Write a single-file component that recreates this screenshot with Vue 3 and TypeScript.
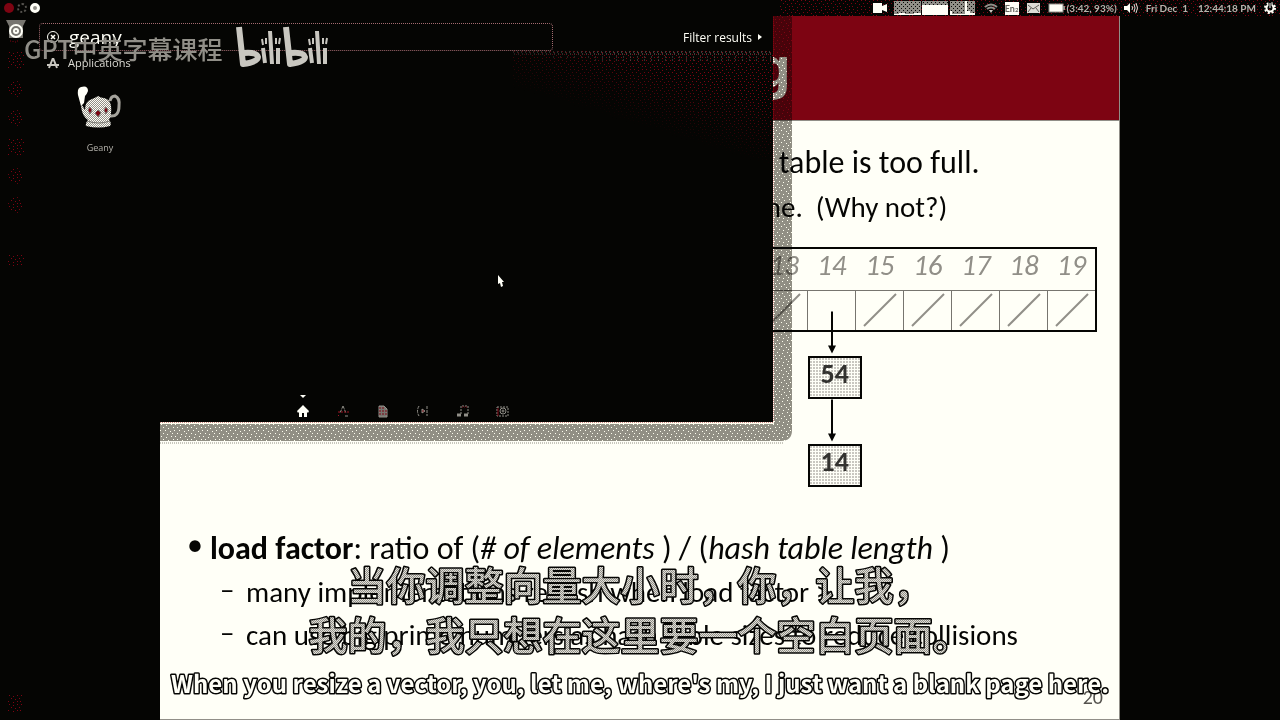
<script setup lang="ts">
import { ref } from 'vue'

const query = ref('geany')
const buckets: number[] = [13, 14, 15, 16, 17, 18, 19]
const filledBucket = 14
const chain: number[] = [54, 14]
const lenses: string[] = ['Home', 'Applications', 'Files', 'Videos', 'Music', 'Photos']
const launcherItems: number[] = [1, 2, 3, 4, 5, 6, 7]
</script>

<template>
  <div class="desktop">
    <svg class="patterns" width="0" height="0" aria-hidden="true">
      <defs>
        <pattern id="red-dots" width="12" height="9" patternUnits="userSpaceOnUse">
          <path d="M1 0h1v1h-1zM5 1h1v1h-1zM9 0h1v1h-1zM3 3h1v1h-1zM7 4h1v1h-1zM11 3h1v1h-1zM0 6h1v1h-1zM5 7h1v1h-1zM9 6h1v1h-1z" fill="#7d0412" />
        </pattern>
        <pattern id="white-dots" width="14" height="12" patternUnits="userSpaceOnUse">
          <rect width="14" height="12" fill="#918f88" />
          <path d="M1 0h1v1h-1zM6 1h1v1h-1zM11 0h1v1h-1zM3 3h1v1h-1zM8 4h1v1h-1zM13 3h1v1h-1zM0 6h1v1h-1zM5 6h1v1h-1zM10 7h1v1h-1zM3 9h1v1h-1zM7 10h1v1h-1zM12 9h1v1h-1z" fill="#fffff7" />
        </pattern>
      </defs>
    </svg>

    <header class="topbar">
      <div class="window-controls">
        <button class="ctl close" aria-label="Close"></button>
        <button class="ctl minimize" aria-label="Minimize"></button>
        <button class="ctl restore" aria-label="Restore"></button>
      </div>
      <div class="indicators">
        <svg class="grain" width="100%" height="16"><rect width="100%" height="16" fill="url(#red-dots)" /></svg>
        <svg class="i-cam" width="14" height="10" viewBox="0 0 14 10"><path d="M0 0H9V3L14 1V9L9 7V10H0Z" fill="#fffff7" /></svg>
        <svg class="i-graph" width="84" height="16" viewBox="0 0 84 16">
          <defs>
            <pattern id="load" width="4" height="4" patternUnits="userSpaceOnUse">
              <rect width="4" height="4" fill="#918f88" /><path d="M0 0h1v1H0zM2 2h1v1H2z" fill="#050503" />
            </pattern>
          </defs>
          <rect x="1" y="1" width="27" height="14" fill="url(#load)" />
          <path d="M1 14h5v-1h6v1h9v-1h7v2H1z" fill="#fffff7" />
          <rect x="29" y="1" width="26" height="4" fill="url(#load)" /><rect x="29" y="5" width="26" height="10" fill="#fffff7" />
          <rect x="57" y="1" width="25" height="14" fill="url(#load)" />
          <path d="M57 15v-4h2v3h13V1h2v10h3v2h5v2z" fill="#fffff7" />
        </svg>
        <svg class="i-wifi" width="14" height="10" viewBox="0 0 14 10"><path d="M1 4Q7 -1 13 4M3 6Q7 3 11 6" fill="none" stroke="#918f88" stroke-width="2" /><path d="M5 7h4l-2 3z" fill="#c9c7c0" /></svg>
        <span class="keyboard">En<small>2</small></span>
        <svg class="i-mail" width="13" height="10" viewBox="0 0 13 10"><rect width="13" height="10" fill="#dddcd5" /><path d="M1 2L6 6L12 2M1 9L4 5M12 9L9 5" fill="none" stroke="#5c5b56" /></svg>
        <svg class="i-bat" width="17" height="10" viewBox="0 0 17 10"><rect x="1" y="1" width="14" height="8" fill="#fffff7" stroke="#918f88" /><path d="M16 3v4" stroke="#918f88" stroke-width="2" /></svg>
        <span class="battery">(3:42, 93%)</span>
        <svg class="i-vol" width="14" height="10" viewBox="0 0 14 10"><path d="M0 3H3L6 0V10L3 7H0Z" fill="#fffff7" /><path d="M8 3Q9 5 8 7M10 1Q12 5 10 9M12 0Q15 5 12 10" fill="none" stroke="#dddcd5" /></svg>
        <span class="day">Fri Dec&nbsp; 1</span>
        <span class="time">12:44:18 PM</span>
        <svg class="i-gear" width="12" height="12" viewBox="0 0 12 12"><circle cx="6" cy="6" r="3.5" fill="none" stroke="#fffff7" stroke-width="2" /><circle cx="6" cy="6" r="5" fill="none" stroke="#fffff7" stroke-width="2" stroke-dasharray="2 1.93" /><path d="M6 0v6" stroke="#050503" stroke-width="3" /><path d="M6 1v5" stroke="#fffff7" /></svg>
      </div>
    </header>

    <main class="slide">
      <div class="banner"><h1>g</h1></div>
      <div class="upper">
        <p class="lead">table is too full.</p>
        <p class="follow">ne.&nbsp; (Why not?)</p>
        <div class="table-wrap">
          <table>
            <thead>
              <tr><th v-for="n in buckets" :key="n" scope="col">{{ n }}</th></tr>
            </thead>
            <tbody>
              <tr>
                <td v-for="n in buckets" :key="n">
                  <svg v-if="n !== filledBucket" width="34" height="34" viewBox="0 0 34 34"><path d="M1 33L33 1" stroke="#918f88" stroke-width="2" /></svg>
                </td>
              </tr>
            </tbody>
          </table>
          <div class="chain">
            <template v-for="value in chain" :key="value">
              <svg class="arrow" width="8" height="44" viewBox="0 0 8 44"><path d="M4 0V36" stroke="#050503" stroke-width="2" /><path d="M0 34H8L4 42Z" fill="#050503" /></svg>
              <div class="node">{{ value }}</div>
            </template>
          </div>
        </div>
      </div>
      <ul class="points">
        <li class="main-point">
          <p><b>load factor</b>: ratio of (<i># of elements </i>) / (<i>hash table length </i>)</p>
          <ul>
            <li>many implementations rehash when load factor ≥ .</li>
            <li>can use big prime numbers as hash table sizes to reduce collisions</li>
          </ul>
        </li>
      </ul>
      <span class="page-number">20</span>
    </main>

    <svg class="dash-shadow" width="632" height="428">
      <path d="M0 0H632V414Q632 425 621 425H0Z" fill="url(#white-dots)" />
      <path d="M0 427H624" stroke="#918f88" stroke-width="1" stroke-dasharray="1 1" />
      <path d="M0 407H613V0" fill="none" stroke="#fffff7" stroke-width="2" />
      <path d="M0 406H613V0" fill="none" stroke="#a01525" stroke-width="1" stroke-dasharray="1 1" />
    </svg>
    <nav class="launcher" aria-label="Launcher">
      <button class="home" aria-label="Dash home">
        <svg width="22" height="26" viewBox="0 0 22 26"><path d="M1 1H21L18 7V19H4V7Z" fill="#77756f" /><circle cx="11" cy="12" r="6" fill="#77756f" stroke="#fffff7" stroke-width="2" /><circle cx="11" cy="12" r="3" fill="#fffff7" /><circle cx="11" cy="12" r="1" fill="#77756f" /><path d="M5 22h3v1h3v-1h4" fill="none" stroke="#7d0412" stroke-dasharray="1 2" /></svg>
      </button>
      <button v-for="n in launcherItems" :key="n" class="app" :class="'app-' + n" :aria-label="'Application ' + n">
        <svg width="16" height="16"><rect width="16" height="16" fill="url(#red-dots)" /></svg>
      </button>
      <button class="app trash" aria-label="Trash">
        <svg width="14" height="18"><rect width="14" height="18" fill="url(#red-dots)" /></svg>
      </button>
    </nav>

    <section class="dash">
      <svg class="sheen" width="260" height="120">
        <rect width="260" height="120" fill="url(#red-dots)" />
        <path d="M0 1H260M1 3H260" stroke="#77756f" stroke-dasharray="1 3" />
        <path d="M40 6H260M82 9H260" stroke="#5c5b56" stroke-dasharray="1 6" />
      </svg>
      <div class="search-row">
        <label class="search">
          <svg width="14" height="14" viewBox="0 0 14 14"><circle cx="7" cy="7" r="5.5" fill="none" stroke="#fffff7" /><path d="M5 5L9 9M9 5L5 9" stroke="#fffff7" stroke-width="1.5" /></svg>
          <input v-model="query" type="text" aria-label="Search" />
        </label>
        <button class="filter">Filter results <svg width="4" height="6" viewBox="0 0 4 6"><path d="M0 0L4 3L0 6Z" fill="#fffff7" /></svg></button>
      </div>
      <h2>
        <svg width="12" height="11" viewBox="0 0 12 11"><path d="M6 0L2 10M6 0L10 10M0 7H12" fill="none" stroke="#c9c7c0" stroke-width="2" /></svg>
        Applications
      </h2>
      <a class="result" href="#geany">
        <svg width="46" height="42" viewBox="0 0 46 42">
          <defs>
            <pattern id="pot" width="2" height="2" patternUnits="userSpaceOnUse">
              <rect width="2" height="2" fill="#fffff7" /><path d="M0 0h1v1H0zM1 1h1v1H1z" fill="#918f88" />
            </pattern>
          </defs>
          <path d="M33 15Q34 10 38 10Q43 12 42 20Q42 31 33 30" fill="none" stroke="#a5a39c" stroke-width="3" />
          <path d="M5 19L8 24Q8 15 15 13Q18 12 21 10Q24 12 27 12Q33 13 34 20Q35 29 32 34Q35 37 33 40Q22 43 9 40Q8 37 11 34Q5 30 4 20Z" fill="url(#pot)" />
          <path d="M1 9Q0 2 4 1Q11 -1 11 5Q10 8 8 10L7 17L4 20Z" fill="#fffff7" />
          <path d="M13 21l2 3-2 4-2-4zM21 24l3 3-3 4-3-4zM29 21l2 3-2 4-2-4z" fill="#7d0412" stroke="#77756f" />
          <path d="M10 35Q22 39 33 35" fill="none" stroke="#77756f" />
        </svg>
        <span>Geany</span>
      </a>
      <nav class="lenses" aria-label="Lenses">
        <button v-for="(lens, i) in lenses" :key="lens" :class="{ current: i === 0 }" :aria-label="lens">
          <svg width="14" height="14" viewBox="0 0 14 14" fill="none" stroke="#918f88">
            <path v-if="i === 0" d="M7 1L13 7L12 9L11 8V13H8V9H6V13H3V8L2 9L1 7Z" fill="#fffff7" stroke="none" />
            <template v-else-if="i === 1"><path d="M7 2L4 9M7 2L10 9M9 12h3" stroke-dasharray="3 1" /><path d="M2 8h11M3 11l-1 1" stroke="#a01525" stroke-dasharray="2 1" /></template>
            <template v-else-if="i === 2"><path d="M3 2H8L11 5V13H3Z" fill="#77756f" /><path d="M3 4h6M3 7h8M3 10h8" stroke="#7d0412" stroke-dasharray="2 1" /></template>
            <template v-else-if="i === 3"><path d="M3 2Q0 7 3 12M11 2V12" stroke-dasharray="3 1" /><path d="M6 5L9 7L6 9Z" fill="#7d0412" /></template>
            <template v-else-if="i === 4"><path d="M5 10V2H12V10" stroke-dasharray="2 1" /><path d="M1 11h4M8 11h4" stroke-width="3" /><path d="M6 3h6" stroke="#7d0412" stroke-dasharray="1 1" /></template>
            <template v-else><path d="M1 3H12V12H1Z" stroke-dasharray="2 1" /><circle cx="7" cy="7" r="3" /><circle cx="7" cy="7" r="1" /><path d="M2 4v8" stroke="#7d0412" /></template>
          </svg>
        </button>
      </nav>
    </section>

    <svg class="cursor" width="6" height="12" viewBox="0 0 6 12"><path d="M0 0L6 7H4L5 11L3 12L2 8L0 9Z" fill="#fffff7" /></svg>

    <div class="watermark">
      <span>GPT中英字幕课程</span>
      <svg width="96" height="44" viewBox="0 0 96 44" fill="none" stroke="#c9c7c0" stroke-linejoin="round">
        <path d="M4 1L8 38Q23 36 23 31Q22 26 9 27" stroke-width="6" />
        <path d="M51 1L55 38Q70 36 70 31Q69 26 56 27" stroke-width="6" />
        <path d="M35 5L37 38M82 5L84 38M28 22L30 37M75 22L77 37M43 22L43 38M90 22L90 38" stroke-width="4" />
        <path d="M27 13l1 6M31 12l0 6M41 12l0 6M45 12l-1 6M74 13l1 6M78 12l0 6M88 12l0 6M92 12l-1 6" stroke-width="2" />
      </svg>
    </div>

    <svg class="subtitles" width="100%" height="150">
      <defs>
        <pattern id="check" width="2" height="2" patternUnits="userSpaceOnUse">
          <rect width="2" height="2" fill="#e0dfd8" /><path d="M0 0h1v1H0zM1 1h1v1H1z" fill="#918f88" />
        </pattern>
      </defs>
      <text class="zh" x="50%" y="40">当你调整向量大小时，你，让我，</text>
      <text class="zh" x="50%" y="90">我的，我只想在这里要一个空白页面。</text>
      <text class="en" x="50%" y="133">When you resize a vector, you, let me, where's my, I just want a blank page here.</text>
    </svg>
  </div>
</template>

<style>
html, body { background: #050503; }
</style>

<style scoped>
* { box-sizing: border-box; }
.desktop { position: relative; min-height: 100vh; display: flex; flex-direction: column; overflow: hidden; background: #050503; color: #050503; font-family: "Open Sans", "Noto Sans", "Noto Sans CJK SC", sans-serif; }
.patterns { position: absolute; }
button { padding: 0; border: 0; background: none; color: inherit; font: inherit; }
h1, h2, p, ul { margin: 0; padding: 0; }
ul { list-style: none; }

.topbar { height: 16px; display: flex; justify-content: space-between; align-items: center; color: #b5b3ac; font: 700 10px/16px Lato, "Open Sans", sans-serif; background: #050503; }
.window-controls { display: flex; gap: 3px; padding-left: 4px; }
.ctl { width: 10px; height: 10px; border-radius: 50%; }
.close { background: #7d0412; }
.minimize { border: 2px dotted #55534e; }
.restore { border: 3px solid #fffff7; background: #918f88; }
.indicators { position: relative; display: flex; align-items: center; height: 16px; width: 500px; padding-right: 4px; justify-content: flex-end; white-space: nowrap; }
.indicators > * { position: relative; }
.indicators .grain { position: absolute; left: 0; top: 0; }
.i-graph { margin: 0 7px 0 6px; }
.i-wifi { margin-right: 7px; }
.keyboard { width: 14px; height: 13px; background: #fffff7; color: #66645f; line-height: 13px; text-align: center; font-size: 9px; }
.keyboard small { font-size: 6px; }
.i-mail { margin: 0 8px; }
.battery { margin: 0 7px 0 2px; }
.day { margin: 0 10px 0 8px; }
.i-gear { margin-left: 8px; }

.slide { position: relative; width: 75%; margin: 0 auto; flex: 1; background: #fffff7; border-right: 1px solid #918f88; border-bottom: 1px solid #918f88; font-family: Carlito, Lato, "Open Sans", sans-serif; }
.banner { height: 105px; padding-right: 328px; background: #7d0412; border-bottom: 1px solid #918f88; text-align: right; overflow: hidden; }
h1 { color: #fffff7; font: 700 56px/98px "Noto Sans", sans-serif; }
.upper { width: 36%; margin-left: auto; padding-right: 22px; height: 406px; }
.lead { padding: 22px 0 0 5px; font-size: 32px; line-height: 40px; white-space: nowrap; }
.follow { margin: 6px 0 0 -8px; font-size: 29px; line-height: 36px; white-space: nowrap; }
.table-wrap { position: relative; margin: 22px 0 0 -15px; }
table { width: 100%; table-layout: fixed; border-collapse: collapse; border: 2px solid #050503; }
th { height: 42px; padding: 0 0 8px; color: #918f88; font-size: 29px; font-weight: 400; font-style: italic; line-height: 32px; }
td { height: 41px; padding: 0; border: 1px solid #77756f; text-align: center; }
td svg { display: block; margin: auto; }
.chain { position: absolute; top: 64px; left: 49px; display: flex; flex-direction: column; align-items: center; }
.arrow { display: block; height: 45px; margin-right: 5px; }
.node { width: 54px; height: 43px; border: 2px solid #050503; text-align: center; font-size: 28px; font-weight: 700; line-height: 32px; color: #33322f;
  background: radial-gradient(circle at 1px 1px, #c9c7c0 0 1px, transparent 1px) 0 0 / 3px 3px #fffff7; }
.main-point { position: relative; padding-left: 50px; font-size: 32px; line-height: 44px; white-space: nowrap; }
.main-point::before { content: "•"; position: absolute; left: 27px; top: -4px; font-size: 32px; }
.main-point ul { padding: 0 0 0 36px; }
.main-point ul li { position: relative; font-size: 29px; line-height: 43px; }
.main-point ul li::before { content: "–"; position: absolute; left: -26px; top: -3px; }
.page-number { position: absolute; right: 16px; bottom: 12px; font-size: 20px; line-height: 20px; color: #55534e; }

.dash-shadow { position: absolute; left: 12.5%; top: 16px; mix-blend-mode: multiply; }
.launcher { position: absolute; left: 0; top: 16px; bottom: 0; width: 32px; z-index: 2; display: flex; flex-direction: column; align-items: center; gap: 13px; padding-top: 3px; }
.home { height: 20px; }
.home svg { display: block; }
.app { width: 16px; height: 16px; overflow: hidden; }
.app svg { display: block; }
.app-2, .app-3, .app-5, .app-6 { border-radius: 8px; }
.app-7 { margin-top: 29px; height: 12px; }
.trash { margin: auto 0 6px; height: 20px; }

.dash { position: absolute; left: 0; top: 16px; width: 773px; height: 406px; padding-left: 39px; background: #050503; color: #dddcd5; }
.sheen { position: absolute; right: 0; top: 35px;
  -webkit-mask-image: linear-gradient(197deg, #000 0 25%, transparent 58%); mask-image: linear-gradient(197deg, #000 0 25%, transparent 58%); }
.search-row { position: relative; display: flex; justify-content: space-between; padding: 7px 11px 0 0; }
.search { display: flex; align-items: center; gap: 9px; width: 514px; height: 28px; padding-left: 6px; border: 1px dotted #a46b70; border-radius: 4px; }
.search input { flex: 1; min-width: 0; padding: 0; border: 0; outline: 0; background: none; color: #fffff7; font: 500 19px/26px "Open Sans", sans-serif; }
.filter { display: flex; align-items: center; gap: 6px; height: 28px; font-size: 12px; font-weight: 500; color: #fffff7; }
h2 { display: flex; align-items: center; gap: 9px; padding: 3px 0 0 8px; font-size: 11px; font-weight: 500; line-height: 18px; }
.result { display: flex; flex-direction: column; align-items: center; width: 46px; margin: 14px 0 0 38px; color: #b5b3ac; font-size: 9px; line-height: 12px; text-decoration: none; }
.result span { margin-top: 14px; }
.lenses { position: absolute; left: 296px; bottom: 3px; display: flex; gap: 26px; }
.lenses button { position: relative; width: 14px; height: 16px; }
.lenses svg { display: block; }
.lenses .current::before { content: ""; position: absolute; left: 4px; top: -8px; border: 3px solid transparent; border-top-color: #fffff7; border-bottom: 0; }

.cursor { position: absolute; left: 498px; top: 275px; }
.watermark { position: absolute; left: 24px; top: 24px; z-index: 3; display: flex; align-items: center; gap: 13px; color: #918f88; font: 500 25px/48px "Noto Sans CJK SC", sans-serif; white-space: nowrap; pointer-events: none; }
.subtitles { position: absolute; left: 0; bottom: 10px; pointer-events: none; font-family: "Noto Sans CJK SC", sans-serif; }
.subtitles text { text-anchor: middle; paint-order: stroke; stroke: #050503; stroke-width: 3px; stroke-linejoin: round; }
.zh { fill: url(#check); font-size: 39px; font-weight: 500; }
.en { fill: #fffff7; font-size: 24px; font-weight: 700; }
</style>
